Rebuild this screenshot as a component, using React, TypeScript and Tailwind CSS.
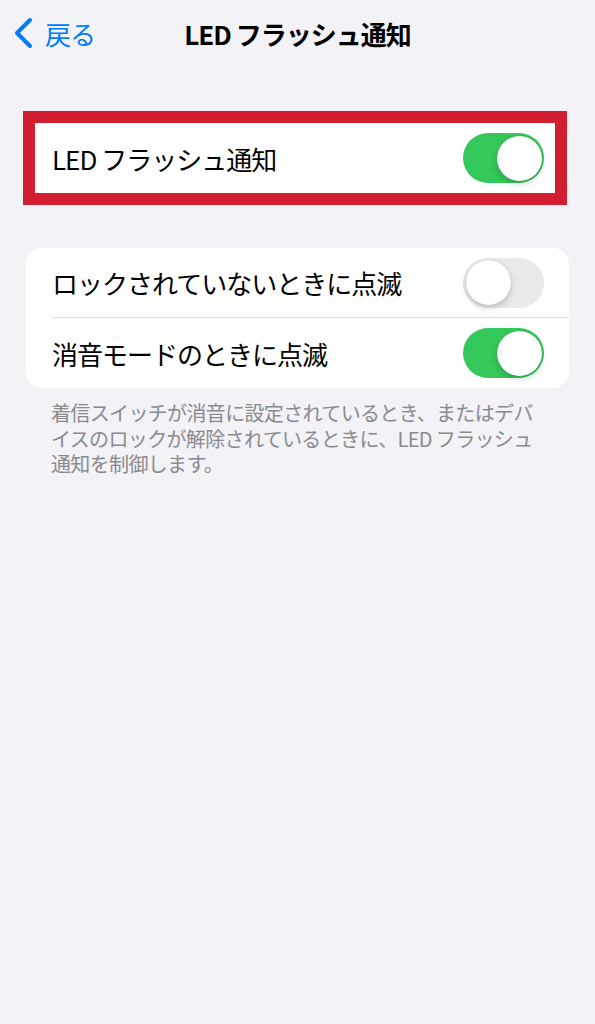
import React from "react";

const JP = { fontFamily: '"Noto Sans CJK JP", "Noto Sans", sans-serif' };

function Toggle({ on }: { on: boolean }) {
  return (
    <div
      className={`relative h-[50px] w-[81px] shrink-0 rounded-full ${
        on ? "bg-[#34c759]" : "bg-[#e9e9eb]"
      }`}
    >
      <div
        className={`absolute top-[2.5px] h-[45px] w-[45px] rounded-full bg-white shadow-[0_3px_6px_rgba(0,0,0,0.18),0_0_1px_rgba(0,0,0,0.2)] ${
          on ? "left-[33.5px]" : "left-[2.5px]"
        }`}
      />
    </div>
  );
}

function Row({ label, on, last }: { label: string; on: boolean; last?: boolean }) {
  return (
    <div className="flex h-[70px] items-center pl-[26px]">
      <div
        className={`flex h-full flex-1 items-center pr-[25px] ${
          last ? "" : "border-b border-[#dcdce0]"
        }`}
      >
        <span className="flex-1 whitespace-pre text-[26px] tracking-[-1px] text-black">{label}</span>
        <Toggle on={on} />
      </div>
    </div>
  );
}

export default function App() {
  return (
    <div className="min-h-[1024px] w-[595px] bg-[#f2f2f7]" style={JP}>
      {/* Nav bar */}
      <div className="relative flex h-[66px] items-center">
        <div className="flex items-center pl-[14px]">
          <svg width="20" height="32" viewBox="0 0 20 32" className="mt-[-1px]">
            <polyline
              points="16,3 3,16 16,29"
              fill="none"
              stroke="#007aff"
              strokeWidth="4"
              strokeLinecap="round"
              strokeLinejoin="round"
            />
          </svg>
          <span className="ml-[11px] text-[26px] tracking-[-1px] text-[#007aff]">戻る</span>
        </div>
        <div className="pointer-events-none absolute inset-x-0 top-0 flex h-[66px] items-center justify-center">
          <span className="whitespace-pre text-[26px] font-bold tracking-[-1px] text-black">LED フラッシュ通知</span>
        </div>
      </div>

      {/* First card with red highlight */}
      <div className="relative mt-[57px] ml-[26px] w-[543px]">
        <div className="rounded-[16px] bg-white">
          <Row label="LED フラッシュ通知" on last />
        </div>
        <div className="pointer-events-none absolute left-[-3px] right-[2px] top-[-12px] bottom-[-12px] border-[12px] border-[#d31d30]" />
      </div>

      {/* Second card */}
      <div className="mt-[55px] ml-[26px] w-[543px] overflow-hidden rounded-[16px] bg-white">
        <Row label="ロックされていないときに点滅" on={false} />
        <Row label="消音モードのときに点滅" on last />
      </div>

      {/* Footer */}
      <div className="mt-[12px] pl-[51px] text-[20px] leading-[25.5px] tracking-[-0.65px] text-[#8a8a8e]">
        <div className="whitespace-nowrap">着信スイッチが消音に設定されているとき、またはデバ</div>
        <div className="whitespace-pre">イスのロックが解除されているときに、LED フラッシュ</div>
        <div className="whitespace-nowrap">通知を制御します。</div>
      </div>
    </div>
  );
}
